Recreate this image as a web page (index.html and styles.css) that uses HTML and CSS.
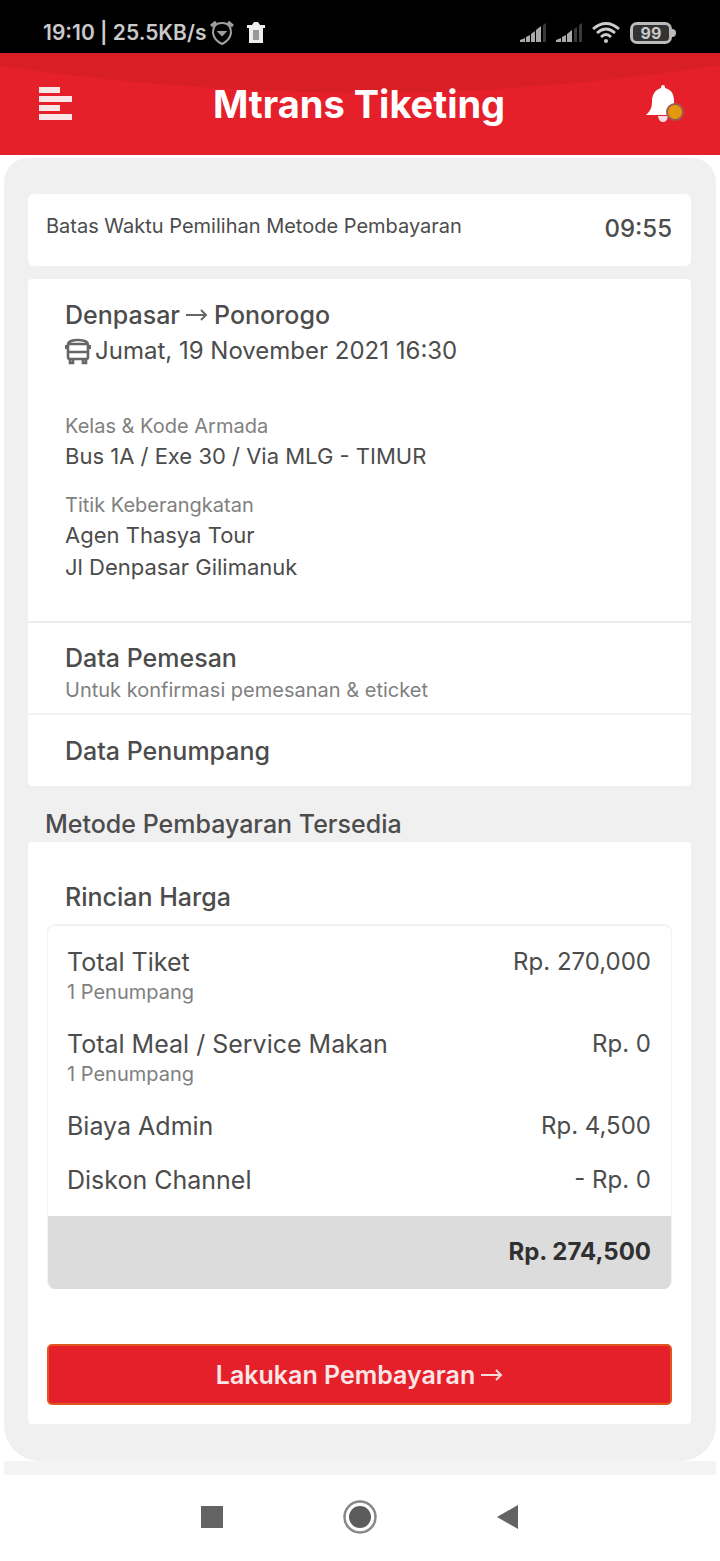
FILE: index.html
```html
<!DOCTYPE html>
<html lang="id">
<head>
<meta charset="utf-8">
<meta name="viewport" content="width=device-width, initial-scale=1">
<title>Mtrans Tiketing</title>
<link rel="stylesheet" href="styles.css">
</head>
<body>
<div class="statusbar">
  <div class="status-left">
    <span>19:10 | 25.5KB/s</span>
    <svg width="24" height="26" viewBox="0 0 24 26" fill="none" stroke="#a0a0a0" stroke-width="2"><path d="M7 4Q12 2 17 4Q21 6 21 13Q20 20 12 24Q4 20 3 13Q3 6 7 4Z"/><path stroke-width="3" d="M1 6L6 2M18 2L23 6"/><path fill="#a0a0a0" d="M9 12H15L12 15Z"/></svg>
    <svg class="trash" width="20" height="22" viewBox="0 0 20 22"><path fill="#eee" d="M1 3H6L8 0H12L14 3H19V6H17V21H3V6H1Z"/><path fill="#999" d="M7 8H13V18H7Z"/></svg>
  </div>
  <div class="status-right">
    <svg width="28" height="22" viewBox="0 0 28 22"><path fill="#aaa" d="M0 20V18L5 16V20ZM6 20V15L10 13V20ZM11 20V12L15 9V20ZM16 20V8L21 4V20Z"/><path fill="#3a3a3a" d="M23 3L26 1V20H23Z"/></svg>
    <svg width="28" height="22" viewBox="0 0 28 22"><path fill="#aaa" d="M0 20V18L5 16V20ZM6 20V15L10 13V20ZM11 20V12L16 8V20Z"/><path fill="#3a3a3a" d="M18 7L21 5V20H18ZM23 3L26 1V20H23Z"/></svg>
    <svg width="28" height="22" viewBox="0 0 28 22" fill="none" stroke="#ccc" stroke-width="2.8"><path d="M1 7Q14-4 27 7M5 11Q14 3 23 11M9 15Q14 10 19 15"/><circle cx="14" cy="19" r="2" fill="#ccc" stroke="none"/></svg>
    <span class="battery">99</span>
  </div>
</div>
<header class="header">
  <svg class="header-curve" viewBox="0 0 720 102" preserveAspectRatio="none" aria-hidden="true"><path fill="#d91f26" d="M0 0H720V12Q540 40 360 40Q170 38 0 13Z"/></svg>
  <button class="icon-button" aria-label="Menu"><svg width="33" height="36" viewBox="0 0 33 36" fill="#fbe6e7"><rect y="1" width="21" height="6"/><rect y="10" width="33" height="6"/><rect y="19" width="21" height="6"/><rect y="28" width="33" height="6"/></svg></button>
  <h1 class="title">Mtrans Tiketing</h1>
  <button class="icon-button" aria-label="Notifikasi"><svg width="38" height="40" viewBox="0 0 38 40"><path fill="#fff" d="M17 1C19 1 19 3 19 4C27 6 28 12 28 18C28 24 30 27 34 31H0C4 27 6 24 6 18C6 12 8 6 15 4C15 3 15 1 17 1Z"/><path fill="#f5dde8" d="M12 32H22Q21 38 17 38Q13 38 12 32Z"/><circle cx="29" cy="28" r="8" fill="#e6980c" stroke="#9c5a55" stroke-width="2"/></svg></button>
</header>
<div class="backdrop">
<main class="panel">
  <section class="card timer">
    <span class="timer-label">Batas Waktu Pemilihan Metode Pembayaran</span>
    <time class="timer-value">09:55</time>
  </section>
  <section class="card trip">
    <div class="trip-info">
      <h2 class="heading route">Denpasar <svg width="22" height="18" viewBox="0 0 22 18" fill="none" stroke="#666" stroke-width="2" role="img" aria-label="ke"><path d="M0 9H20M15 4L20 9L15 14"/></svg> Ponorogo</h2>
      <p class="heading date"><svg width="26" height="28" viewBox="0 0 26 28" fill="none" stroke="#666" stroke-width="2.6"><path d="M3 20V8Q3 3 13 3Q23 3 23 8V20Q23 22 21 22H5Q3 22 3 20ZM3 15H23M4 7H22M1 8V12M25 8V12"/><path d="M5 22V26H8V22M18 22V26H21V22"/></svg> Jumat, 19 November 2021 16:30</p>
      <dl class="details">
        <div><dt>Kelas &amp; Kode Armada</dt><dd>Bus 1A / Exe 30 / Via MLG - TIMUR</dd></div>
        <div><dt>Titik Keberangkatan</dt><dd>Agen Thasya Tour</dd><dd>Jl Denpasar Gilimanuk</dd></div>
      </dl>
    </div>
    <div class="customer">
      <h2 class="heading">Data Pemesan</h2>
      <p class="note">Untuk konfirmasi pemesanan &amp; eticket</p>
    </div>
    <div class="passenger"><h2 class="heading">Data Penumpang</h2></div>
  </section>
  <h2 class="heading methods">Metode Pembayaran Tersedia</h2>
  <section class="card payment">
    <h3 class="heading price-title">Rincian Harga</h3>
    <div class="price-box">
      <ul class="prices">
        <li><div><p class="name">Total Tiket</p><p class="note">1 Penumpang</p></div><span class="amount">Rp. 270,000</span></li>
        <li><div><p class="name">Total Meal / Service Makan</p><p class="note">1 Penumpang</p></div><span class="amount">Rp. 0</span></li>
        <li><p class="name">Biaya Admin</p><span class="amount">Rp. 4,500</span></li>
        <li><p class="name">Diskon Channel</p><span class="amount">- Rp. 0</span></li>
      </ul>
      <p class="total">Rp. 274,500</p>
    </div>
    <button class="pay">Lakukan Pembayaran <svg width="22" height="18" viewBox="0 0 22 18" fill="none" stroke="#fbdada" stroke-width="2" aria-hidden="true"><path d="M0 9H20M15 4L20 9L15 14"/></svg></button>
  </section>
</main>
</div>
<nav class="navbar" aria-label="Navigasi sistem">
  <button aria-label="Aplikasi terbaru"><svg width="36" height="36" viewBox="0 0 36 36"><rect x="7" y="7" width="22" height="22" fill="#636363"/></svg></button>
  <button aria-label="Beranda"><svg width="36" height="36" viewBox="0 0 36 36"><circle cx="18" cy="18" r="15.5" fill="none" stroke="#888" stroke-width="2.5"/><circle cx="18" cy="18" r="11" fill="#5c5c5c"/></svg></button>
  <button aria-label="Kembali"><svg width="36" height="36" viewBox="0 0 36 36"><path d="M7 18L28 6V30Z" fill="#636363"/></svg></button>
</nav>
</body>
</html>
```
FILE: styles.css
```css
* { box-sizing: border-box; margin: 0; padding: 0; }
body { background: #fff; color: #4c4c4c; font-family: Inter, "Open Sans", sans-serif; font-size: 22px; line-height: 32px; }
button { background: none; border: 0; font: inherit; color: inherit; cursor: pointer; }
svg { display: block; flex: none; }

.statusbar { display: flex; justify-content: space-between; align-items: center; min-height: 53px; padding: 12px 48px 0 43px; background: #000; color: #c9c9c9; font-size: 21px; font-weight: 600; }
.status-left, .status-right { display: flex; align-items: center; gap: 8px; }
.status-left { gap: 4px; }
.trash { margin-left: 8px; }
.battery { position: relative; width: 42px; height: 22px; margin-left: 2px; border: 3px solid #bbb; border-radius: 7px; background: #333; background-clip: content-box; text-align: center; font-size: 16px; line-height: 16px; font-weight: 700; }
.battery::after { content: ""; position: absolute; right: -7px; top: 4px; width: 4px; height: 8px; border-radius: 0 4px 4px 0; background: #bbb; }

.header { position: relative; display: flex; justify-content: space-between; align-items: center; min-height: 102px; padding: 0 36px 0 39px; background: #e6202a; color: #fff; }
.header-curve { position: absolute; inset: 0; width: 100%; height: 100%; }
.icon-button, .title { position: relative; }
.title { font-size: 38px; line-height: 48px; font-weight: 700; }

.backdrop { margin: 3px 4px 0; padding-bottom: 14px; background: linear-gradient(#f4f4f4, #f4f4f4) bottom / 100% 14px no-repeat; }
.panel { padding: 36px 25px 37px 24px; border-radius: 24px 24px 36px 36px; background: #f0f0f0; }
.card { background: #fff; border-radius: 4px; }
.timer { display: flex; justify-content: space-between; gap: 16px; min-height: 72px; margin-bottom: 13px; padding: 16px 19px 16px 18px; border-radius: 6px; }
.timer-label { font-size: 20px; }
.timer-value { padding-top: 3px; font-size: 24px; font-weight: 500; }

.heading { font-size: 25px; line-height: 36px; font-weight: 500; }
.trip-info { padding: 18px 37px; border-bottom: 2px solid #ececec; }
.route, .date { display: flex; align-items: center; gap: 6px; }
.date { gap: 4px; font-size: 24px; font-weight: 400; }
.details { display: grid; gap: 19px; margin: 43px 0 20px; }
dt, .note { color: #808080; font-size: 20px; line-height: 28px; }
dd { font-size: 22px; }
.customer { padding: 17px 37px 9px; border-bottom: 2px solid #f3f3f3; }
.passenger { padding: 18px 37px 17px; }

.methods { margin-top: 20px; padding-left: 17px; }
.payment { padding: 37px 19px 19px; }
.price-title { padding-left: 18px; }
.price-box { margin: 9px 0 55px; border: 2px solid #f2f2f2; border-width: 2px 1px 0; border-radius: 8px; overflow: hidden; }
.prices { display: grid; gap: 22px; padding: 20px 20px 20px 19px; list-style: none; }
.prices li { display: flex; justify-content: space-between; gap: 16px; }
.name { font-size: 25px; }
.amount { font-size: 24px; }
.total { margin: 0 -1px; padding: 20px 21px 21px; background: #dcdcdc; color: #303030; text-align: right; font-size: 24px; font-weight: 700; }
.pay { display: flex; justify-content: center; align-items: center; gap: 6px; width: 100%; min-height: 61px; border: 2px solid #df5620; border-radius: 5px; background: #e6202a; color: #fbe6e7; font-size: 25px; font-weight: 600; }

.navbar { display: flex; justify-content: center; gap: 112px; padding: 24px 0 26px; }
```
